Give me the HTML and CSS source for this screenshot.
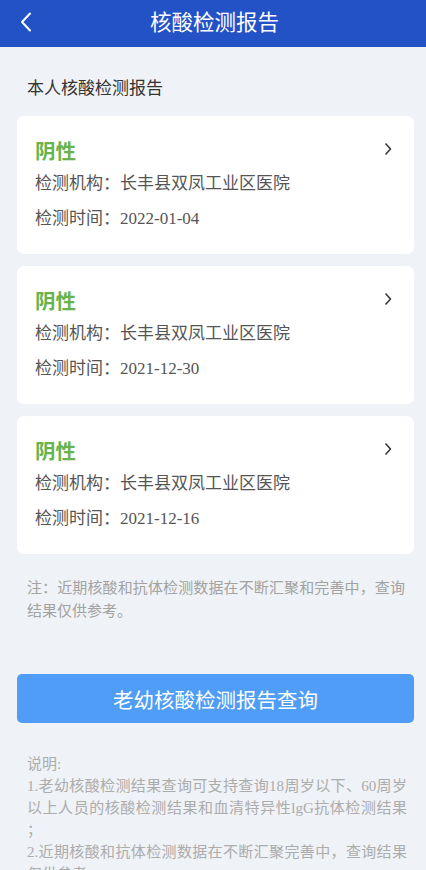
FILE: index.html
```html
<!DOCTYPE html>
<html lang="zh">
<head>
<meta charset="utf-8">
<link rel="stylesheet" href="styles.css">
</head>
<body>
<header class="topbar">
  <svg class="back" width="12" height="20" viewBox="0 0 12 20"><path d="M10 1.5 L2 10 L10 18.5" fill="none" stroke="#fff" stroke-width="2" stroke-linecap="round" stroke-linejoin="round"/></svg>
  <h1 class="title">核酸检测报告</h1>
</header>
<main class="content">
  <h2 class="section-title">本人核酸检测报告</h2>
  <div class="card">
    <div class="row-head"><span class="result">阴性</span><svg class="chev" width="8" height="14" viewBox="0 0 8 14"><path d="M1.5 1.5 L6.5 7 L1.5 12.5" fill="none" stroke="#333" stroke-width="1.5" stroke-linejoin="round"/></svg></div>
    <div class="line">检测机构：长丰县双凤工业区医院</div>
    <div class="line last">检测时间：2022-01-04</div>
  </div>
  <div class="card">
    <div class="row-head"><span class="result">阴性</span><svg class="chev" width="8" height="14" viewBox="0 0 8 14"><path d="M1.5 1.5 L6.5 7 L1.5 12.5" fill="none" stroke="#333" stroke-width="1.5" stroke-linejoin="round"/></svg></div>
    <div class="line">检测机构：长丰县双凤工业区医院</div>
    <div class="line last">检测时间：2021-12-30</div>
  </div>
  <div class="card">
    <div class="row-head"><span class="result">阴性</span><svg class="chev" width="8" height="14" viewBox="0 0 8 14"><path d="M1.5 1.5 L6.5 7 L1.5 12.5" fill="none" stroke="#333" stroke-width="1.5" stroke-linejoin="round"/></svg></div>
    <div class="line">检测机构：长丰县双凤工业区医院</div>
    <div class="line last">检测时间：2021-12-16</div>
  </div>
  <p class="note">注：近期核酸和抗体检测数据在不断汇聚和完善中，查询结果仅供参考。</p>
  <button class="query-btn">老幼核酸检测报告查询</button>
  <div class="desc">
    <p>说明:</p>
    <p>1.老幼核酸检测结果查询可支持查询18周岁以下、60周岁以上人员的核酸检测结果和血清特异性lgG抗体检测结果；</p>
    <p>2.近期核酸和抗体检测数据在不断汇聚完善中，查询结果仅供参考。</p>
  </div>
</main>
</body>
</html>
```
FILE: styles.css
```css
* { box-sizing: border-box; margin: 0; padding: 0; }
html, body { background: #eff2f6; }
body {
  font-family: "Noto Sans CJK SC", "Noto Sans", sans-serif;
  width: 426px;
  height: 870px;
  overflow: hidden;
}
.topbar {
  height: 47px;
  background: #2352c7;
  display: flex;
  align-items: center;
  justify-content: center;
  position: relative;
}
.back { position: absolute; left: 20px; top: 12px; }
.title {
  color: #fff;
  font-size: 21.5px;
  font-weight: 400;
  line-height: 40px;
  margin-top: -6px;
  margin-left: 3px;
}
.content { padding: 0 12px 0 17px; }
.section-title {
  font-size: 17px;
  font-weight: 400;
  color: #333;
  line-height: 34px;
  padding: 23px 0 0 10px;
  margin-bottom: 12px;
}
.card {
  background: #fff;
  border-radius: 7px;
  padding: 17px 20px 18px 18px;
  margin-bottom: 12px;
  width: 397px;
}
.row-head {
  display: flex;
  justify-content: space-between;
  align-items: center;
  height: 34px;
}
.result {
  color: #69b34c;
  font-size: 20.5px;
  font-weight: 700;
}
.chev { margin-top: -2px; margin-right: 2px; }
.line {
  font-family: "Liberation Serif", "Noto Sans CJK SC", serif;
  font-size: 17px;
  color: #555;
  line-height: 34px;
}
.line.last { line-height: 35px; }
.note {
  font-size: 15px;
  color: #a2a2a2;
  line-height: 23px;
  padding: 9px 0 0 10px;
  width: 388px;
  text-align: justify;
}
.query-btn {
  display: block;
  width: 397px;
  height: 49px;
  margin-top: 53px;
  border: none;
  border-radius: 5px;
  background: #4f9df7;
  color: #fff;
  font-family: "Noto Sans CJK SC", sans-serif;
  font-size: 20.5px;
}
.desc {
  margin-top: 30px;
  padding-left: 10px;
  width: 390px;
  font-family: "Liberation Serif", "Noto Sans CJK SC", serif;
  font-size: 15px;
  color: #acacac;
  line-height: 22px;
  text-align: justify;
  line-break: anywhere;
}
```
